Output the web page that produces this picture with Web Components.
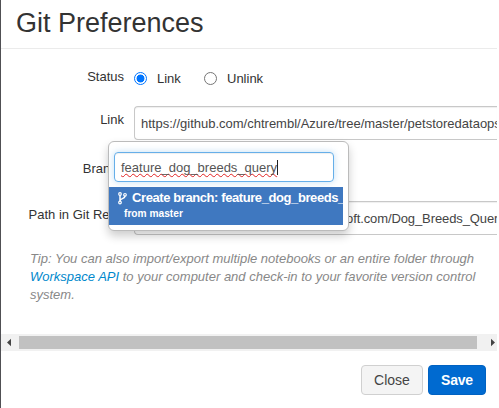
<!DOCTYPE html>
<html lang="en"><head><meta charset="utf-8"><title>Git Preferences</title>
<style>
body{margin:0;background:#fff;font-family:"Liberation Sans",Arial,sans-serif;overflow:hidden}
</style></head><body>
<git-dialog></git-dialog>
<script>
const define=(name,html)=>customElements.define(name,class extends HTMLElement{
  constructor(){super();this.attachShadow({mode:'open'}).innerHTML='<style>*{box-sizing:border-box}</style>'+html;}
});
define('dialog-header',`<style>:host{display:block;height:49px;padding:7px 0 0 15px;border-bottom:1px solid #ebebeb;box-sizing:border-box}
h1{margin:0;font-size:27px;font-weight:400;line-height:32px;color:#333;white-space:nowrap}</style><h1><slot></slot></h1>`);
define('form-row',`<style>:host{display:flex;box-sizing:border-box;color:#333;font-size:13px;line-height:18px}
.label{width:123px;flex:none;text-align:right;padding-top:var(--label-top,0);white-space:nowrap}
.field{flex:1;min-width:0;margin-left:10px}</style><div class="label"><slot name="label"></slot></div><div class="field"><slot></slot></div>`);
define('radio-option',`<style>:host{display:inline-flex;align-items:center;width:70px;height:18px;vertical-align:top}
i{width:13px;height:13px;border:1px solid #767676;border-radius:50%;margin-right:10px;flex:none}
:host([checked]) i{border-color:#0075ff;background:radial-gradient(circle,#0075ff 0 3.6px,#fff 4.3px)}
span{padding-top:1px}</style><i></i><span><slot></slot></span>`);
define('text-field',`<style>:host{display:flex;align-items:center;height:34px;box-sizing:border-box;border:1px solid #c8c8c8;border-right:0;border-radius:4px 0 0 4px;padding:2px 0 0 6px;color:#444;white-space:nowrap;overflow:hidden;box-shadow:inset 0 1px 1px #0001}
:host([scrolled]){padding-left:211px;letter-spacing:-.1px}</style><slot></slot>`);
define('branch-menu',`<style>:host{position:absolute;left:108px;top:141px;width:241px;height:90px;box-sizing:border-box;border:1px solid #bbb;border-radius:6px;background:#fff;box-shadow:0 5px 10px #0003;padding:10px 5px 4px 0;color:#555;font-size:13px}
.search{display:flex;align-items:center;height:30px;width:220px;margin-left:5px;border:1px solid #66afe9;border-radius:4px;padding-left:6px;box-shadow:0 0 7px #66afe966,inset 0 1px 1px #0001}
.query{text-decoration:underline wavy #e22222 1px;text-underline-offset:1px;text-decoration-skip-ink:none}
.caret{width:1px;height:15px;background:#222}
.item{margin-top:5px;height:38px;background:#3f78c0;color:#fff;font-weight:700;overflow:hidden;white-space:nowrap;padding:3px 0 0 9px}
.main{display:flex;align-items:center;height:16px;line-height:16px;letter-spacing:-.41px}
svg{flex:none;margin-right:5px}
.sub{font-size:10.2px;line-height:14px;padding:1px 0 0 6px}
</style><div class="search"><span class="query"><slot name="query"></slot></span><span class="caret"></span></div>
<div class="item"><div class="main"><svg width="9" height="13" viewBox="0 0 9 13" fill="none" stroke="#fff" stroke-width="1.2"><circle cx="2" cy="2" r="1.3"/><circle cx="2" cy="10.5" r="1.3"/><circle cx="7" cy="2.8" r="1.3"/><path d="M2 3.3v6M7 4.1c0 3.3-5 1.8-5 4.8" stroke-width="1.5"/></svg><slot></slot></div><div class="sub"><slot name="source"></slot></div></div>`);
define('tip-text',`<style>:host{display:block;color:#888;font-size:13px;font-style:italic;line-height:18px;white-space:nowrap}</style><slot></slot>`);
define('scroll-bar',`<style>:host{display:flex;align-items:center;justify-content:space-between;height:17px;background:#f1f1f1;width:496px}
i{height:13px;width:458px;background:#c1c1c1}svg{display:block}</style><svg width="18" height="17"><path d="M6 8.5l4-3.7v7.4z" fill="#444"/></svg><i></i><svg width="20" height="17"><path d="M18 8.5l-4-3.7v7.4z" fill="#444"/></svg>`);
define('push-button',`<style>:host{display:block}button{display:block;width:100%;height:30px;padding:0;border:1px solid #d0d0d0;border-radius:4px;background:#f4f4f4;color:#444;font:14px "Liberation Sans",Arial,sans-serif}
:host([primary]) button{background:#006ad0;border-color:#0062c2;color:#fff;font-weight:700;letter-spacing:-.2px}</style><button><slot></slot></button>`);
define('git-dialog',`<style>:host{display:block;position:relative;width:499px;height:408px;overflow:hidden;background:linear-gradient(#505054,#505054) 0 0/1px 100% no-repeat,#fff}
.frame{padding-left:1px;width:497px;height:408px;display:flex;flex-direction:column}
.status{margin-top:19px;height:38px}.radios{display:flex;padding-top:1px}
.link{height:47px;--label-top:5px}.branch{height:48px;--label-top:7px}.path{height:49px;--label-top:5px}
tip-text{padding-left:29px;height:84px}
b{font-weight:400;color:#0088cc}
footer{display:flex;justify-content:flex-end;gap:5px;padding:14px 11px 0}
.close{width:62px}.save{width:58px}
</style>
<div class="frame"><dialog-header>Git Preferences</dialog-header>
<form-row class="status"><span slot="label">Status</span><div class="radios"><radio-option checked>Link</radio-option><radio-option>Unlink</radio-option></div></form-row>
<form-row class="link"><span slot="label">Link</span><text-field><span>https://github.com/chtrembl/Azure/tree/master/petstoredataops</span></text-field></form-row>
<form-row class="branch"><span slot="label">Branch</span></form-row>
<form-row class="path"><span slot="label">Path in Git Repo</span><text-field scrolled><span>oft.com/Dog_Breeds_Quer</span></text-field></form-row>
<tip-text>Tip: You can also import/export multiple notebooks or an entire folder through<br><b>Workspace API</b> to your computer and check-in to your favorite version control<br>system.</tip-text>
<scroll-bar></scroll-bar>
<footer><push-button class="close">Close</push-button><push-button class="save" primary>Save</push-button></footer></div>
<branch-menu><span slot="query">feature_dog_breeds_query</span><span>Create branch: feature_dog_breeds_</span><span slot="source">from master</span></branch-menu>`);
</script></body></html>
